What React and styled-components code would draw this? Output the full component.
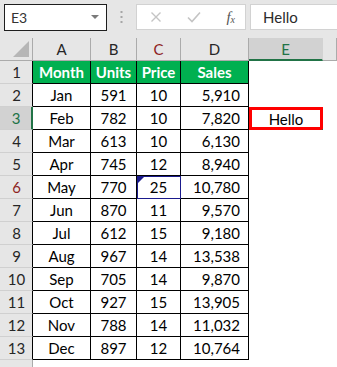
import React from 'react';
import styled, { createGlobalStyle } from 'styled-components';

const GlobalStyle = createGlobalStyle`
  html, body { margin: 0; padding: 0; background: #ffffff; overflow: hidden; }
  body { font-family: Lato, "Open Sans", sans-serif; }
`;

const columns = ['A', 'B', 'C', 'D', 'E', ''];
const data = [
  ['Jan', '591', '10', '5,910'],
  ['Feb', '782', '10', '7,820'],
  ['Mar', '613', '10', '6,130'],
  ['Apr', '745', '12', '8,940'],
  ['May', '770', '25', '10,780'],
  ['Jun', '870', '11', '9,570'],
  ['Jul', '612', '15', '9,180'],
  ['Aug', '967', '14', '13,538'],
  ['Sep', '705', '14', '9,870'],
  ['Oct', '927', '15', '13,905'],
  ['Nov', '788', '14', '11,032'],
  ['Dec', '897', '12', '10,764'],
];

const App = () => {
  const rows = [['Month', 'Units', 'Price', 'Sales'], ...data];
  return (
    <>
      <GlobalStyle />
      <Page>
        <Toolbar>
          <NameBox>
            <span>E3</span>
            <Caret />
          </NameBox>
          <Grip>
            <svg width="3" height="12" viewBox="0 0 3 12">
              <rect x="0.5" y="0" width="2" height="2" fill="#a6a6a6" />
              <rect x="0.5" y="5" width="2" height="2" fill="#a6a6a6" />
              <rect x="0.5" y="10" width="2" height="2" fill="#a6a6a6" />
            </svg>
          </Grip>
          <FormulaTools>
            <svg width="12" height="12" viewBox="0 0 12 12">
              <path d="M1.5 1.5 L10.5 10.5 M10.5 1.5 L1.5 10.5" stroke="#c4c4c4" strokeWidth="1.4" />
            </svg>
            <svg width="14" height="12" viewBox="0 0 14 12">
              <path d="M1 6.5 L5 10.5 L13 1.5" stroke="#c4c4c4" strokeWidth="1.6" fill="none" />
            </svg>
            <Fx>
              f<sub>x</sub>
            </Fx>
          </FormulaTools>
          <FormulaInput>Hello</FormulaInput>
        </Toolbar>

        <Sheet>
          <Corner>
            <svg width="16" height="16" viewBox="0 0 16 16">
              <polygon points="16,0 16,16 0,16" fill="#b6b6b6" />
            </svg>
          </Corner>
          {columns.map((c, i) => (
            <ColHeader key={i} $selected={c === 'E'} $flag={c === 'C'}>
              {c}
            </ColHeader>
          ))}

          {rows.map((r, i) => {
            const n = i + 1;
            return (
              <React.Fragment key={n}>
                <RowHeader $selected={n === 3} $flag={n === 6} $table>
                  {n}
                </RowHeader>
                {r.map((v, j) => (
                  <Cell
                    key={j}
                    $head={i === 0}
                    $right={j === 3 && i > 0}
                    $traced={n === 6 && j === 2}
                  >
                    {v}
                    {n === 6 && j === 2 && <TraceMark />}
                  </Cell>
                ))}
                <Blank $active={n === 3}>
                  {n === 3 && (
                    <>
                      Hello
                      <FillHandle />
                    </>
                  )}
                </Blank>
                <Blank />
              </React.Fragment>
            );
          })}

          <RowHeader />
          <Blank />
          <Blank />
          <Blank />
          <Blank />
          <Blank />
          <Blank />
        </Sheet>
      </Page>
    </>
  );
};

export default App;

const Page = styled.div`
  width: 337px;
  height: 367px;
  overflow: hidden;
  background: #ffffff;
`;

const Toolbar = styled.div`
  height: 38px;
  box-sizing: border-box;
  background: #e6e6e6;
  display: flex;
  align-items: flex-start;
  padding: 4px 0 0 4px;
`;

const NameBox = styled.div`
  width: 103px;
  height: 27px;
  box-sizing: border-box;
  border: 1px solid #1e1e1e;
  background: #ffffff;
  display: flex;
  align-items: center;
  justify-content: space-between;
  padding: 0 7px 0 6px;
  font-size: 14px;
  color: #333333;
`;

const Caret = styled.span`
  width: 0;
  height: 0;
  border-left: 4px solid transparent;
  border-right: 4px solid transparent;
  border-top: 4px solid #7a7a7a;
  margin-bottom: 2px;
`;

const Grip = styled.div`
  width: 29px;
  height: 26px;
  display: flex;
  align-items: center;
  justify-content: center;
`;

const FormulaTools = styled.div`
  width: 110px;
  height: 26px;
  box-sizing: border-box;
  border: 1px solid #d2d2d2;
  background: #ffffff;
  display: flex;
  align-items: center;
  justify-content: space-between;
  padding: 0 10px 0 13px;
`;

const Fx = styled.span`
  font-family: "Liberation Serif", serif;
  font-style: italic;
  font-size: 15px;
  color: #555555;
  line-height: 1;

  sub {
    font-size: 10px;
    vertical-align: -1px;
  }
`;

const FormulaInput = styled.div`
  flex: 1;
  height: 26px;
  margin-left: 4px;
  box-sizing: border-box;
  border: 1px solid #d2d2d2;
  border-right: none;
  background: #ffffff;
  display: flex;
  align-items: center;
  padding-left: 12px;
  font-size: 15px;
  color: #2b2b2b;
`;

const Sheet = styled.div`
  display: grid;
  grid-template-columns: 33px 58px 46px 44px 68px 74px 1fr;
  grid-auto-rows: 23px;
  font-size: 15px;
`;

const Corner = styled.div`
  background: #e6e6e6;
  border-right: 1px solid #ababab;
  border-bottom: 1px solid #ababab;
  display: flex;
  align-items: flex-end;
  justify-content: flex-end;
  padding: 0 3px 3px 0;
`;

const ColHeader = styled.div`
  background: ${(p) => (p.$selected ? '#d2d2d2' : '#e6e6e6')};
  border-right: 1px solid ${(p) => (p.$selected ? '#d2d2d2' : '#ababab')};
  border-bottom: ${(p) => (p.$selected ? '2px solid #217346' : '1px solid #ababab')};
  color: ${(p) => (p.$selected ? '#217346' : p.$flag ? '#8e1f1f' : '#262626')};
  display: flex;
  align-items: center;
  justify-content: center;
`;

const RowHeader = styled.div`
  background: ${(p) => (p.$selected ? '#d2d2d2' : '#e6e6e6')};
  border-right: ${(p) =>
    p.$selected ? '2px solid #217346' : p.$table ? '1px solid #000000' : '1px solid #ababab'};
  border-bottom: 1px solid #d0d0d0;
  color: ${(p) => (p.$selected ? '#217346' : p.$flag ? '#8e1f1f' : '#262626')};
  display: flex;
  align-items: center;
  justify-content: center;
  padding-left: 1px;
`;

const Cell = styled.div`
  position: relative;
  background: ${(p) => (p.$head ? '#00b050' : '#ffffff')};
  color: ${(p) => (p.$head ? '#ffffff' : '#000000')};
  font-weight: ${(p) => (p.$head ? 700 : 400)};
  border-right: 1px solid #000000;
  border-bottom: 1px solid #000000;
  display: flex;
  align-items: center;
  justify-content: ${(p) => (p.$right ? 'flex-end' : 'center')};
  padding-right: ${(p) => (p.$right ? '8px' : '0')};
  box-shadow: ${(p) => (p.$traced ? 'inset 1px 1px 0 #1a1a8c' : 'none')};
  border-right-color: ${(p) => (p.$traced ? '#1a1a8c' : '#000000')};
  border-bottom-color: ${(p) => (p.$traced ? '#1a1a8c' : '#000000')};
`;

const TraceMark = styled.span`
  position: absolute;
  left: 1px;
  top: 1px;
  width: 0;
  height: 0;
  border-top: 6px solid #1a1a8c;
  border-right: 6px solid transparent;
`;

const Blank = styled.div`
  position: relative;
  background: #ffffff;
  display: flex;
  align-items: center;
  justify-content: center;
  color: #000000;
  box-shadow: ${(p) => (p.$active ? 'inset 0 0 0 3px #ff0000' : 'none')};
`;

const FillHandle = styled.span`
  position: absolute;
  right: -3px;
  bottom: -3px;
  width: 4px;
  height: 4px;
  background: #217346;
`;
